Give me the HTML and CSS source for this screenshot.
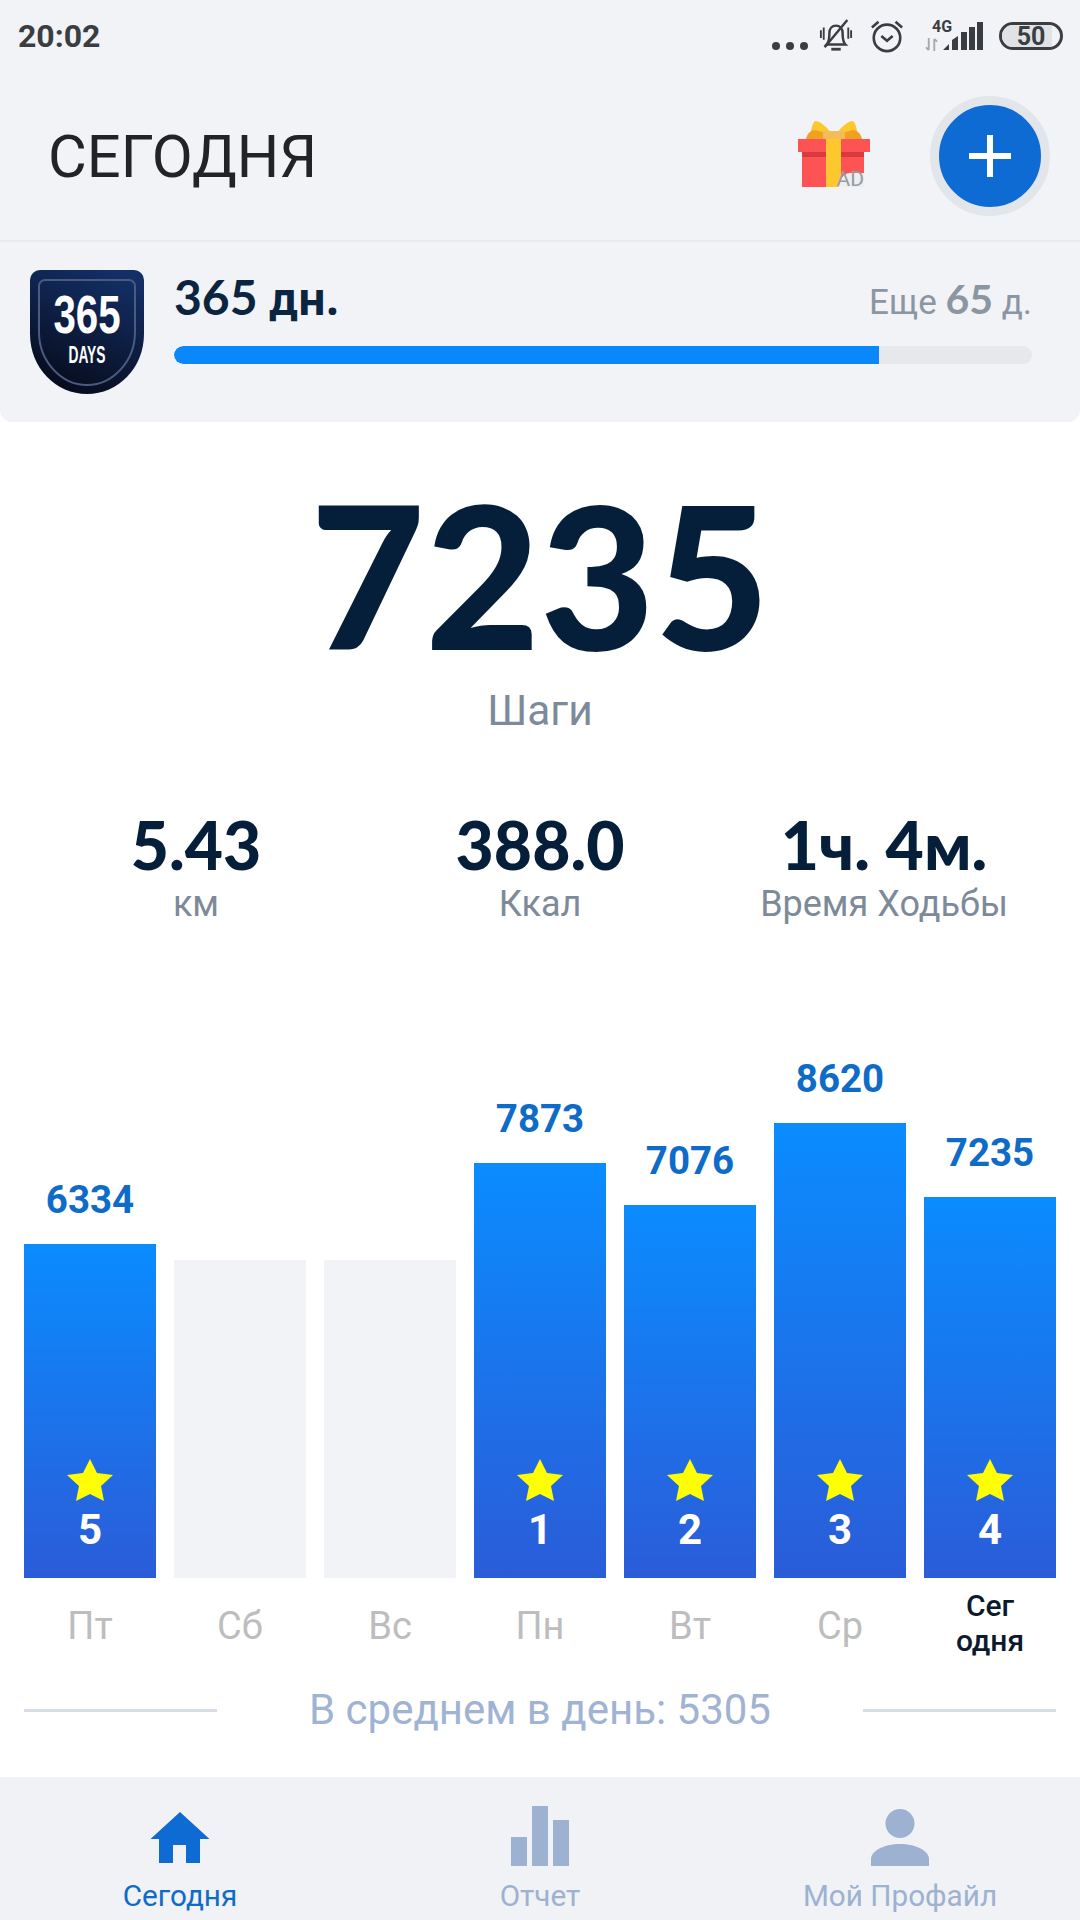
FILE: index.html
```html
<!DOCTYPE html>
<html lang="ru">
<head>
<meta charset="utf-8">
<title>Сегодня</title>
<link rel="stylesheet" href="styles.css">
</head>
<body>
<div class="screen">
  <div class="top">
    <div class="status">
      <span class="clock">20:02</span>
      <div class="status-icons">
        <svg class="ic-dots" viewBox="0 0 36 8"><circle cx="4" cy="4" r="4"/><circle cx="18" cy="4" r="4"/><circle cx="32" cy="4" r="4"/></svg>
        <svg class="ic-bell" viewBox="0 0 36 36" fill="none" stroke="#3a3d42" stroke-width="2.6"><path d="M8 27c3-3 3-8 3-12 0-5 3-8 7-8s7 3 7 8c0 4 0 9 3 12z"/><path d="M13 32h10" stroke-width="3"/><path d="M30 1 6 30"/><path d="M2 12v8M5 9v13M34 12v8M31 9v12" stroke-width="2"/></svg>
        <svg class="ic-alarm" viewBox="0 0 36 36" fill="none" stroke="#3a3d42" stroke-width="2.8"><circle cx="18" cy="20" r="14"/><path d="M12 18l6 5 6-5"/><path d="M2 9l7-6M34 9l-7-6"/></svg>
        <div class="net">
          <span class="net-label">4G</span>
          <svg class="ic-arrows" viewBox="0 0 14 14" fill="none" stroke="#a6a8ab" stroke-width="2"><path d="M4 0v13M1 10l3 3M10 14V1M13 4l-3-3"/></svg>
        </div>
        <svg class="ic-signal" viewBox="0 0 40 28" fill="#3a3d42"><path d="M0 28l6-6v6zM9 18l6-4v14H9zM18 10h6v18h-6zM26 5h6v23h-6zM34 0h6v28h-6z"/></svg>
        <div class="battery"><span class="batt-fill"></span><span class="batt-num">50</span></div>
      </div>
    </div>
    <div class="header">
      <h1 class="title">СЕГОДНЯ</h1>
      <div class="header-actions">
        <div class="gift">
          <svg viewBox="0 0 72 66" width="72" height="66">
            <path d="M36 17C30 6 22 0 17 0c-3 3-5 10-4 18z" fill="#fdc72e"/>
            <path d="M36 17C42 6 50 0 55 0c3 3 5 10 4 18z" fill="#fdc72e"/>
            <path d="M8 18c1-5 4-8 8-9 8 1 15 4 20 9zM64 18c-1-5-4-8-8-9-8 1-15 4-20 9z" fill="#efa222"/>
            <rect x="25" y="10" width="22" height="10" fill="#f2bd58"/>
            <rect y="18" width="72" height="13" fill="#fd5355"/>
            <rect x="4" y="31" width="62" height="35" fill="#fd5355"/>
            <rect x="4" y="31" width="62" height="5" fill="#d93a3f"/>
            <rect x="28" y="18" width="15" height="48" fill="#fdc72e"/>
            <path d="M41 66c0-8 5-14 11-14h14v14z" fill="#eceef1"/>
          </svg>
          <span class="ad">AD</span>
        </div>
        <button class="add"><svg viewBox="0 0 42 42" width="42" height="42"><path d="M18 0h6v18h18v6H24v18h-6V24H0v-6h18z" fill="#fff"/></svg></button>
      </div>
    </div>
  </div>

  <section class="streak">
    <div class="badge">
      <svg viewBox="0 0 114 124" width="114" height="124">
        <defs><linearGradient id="bd" x1="0.7" y1="0" x2="0.3" y2="1"><stop offset="0" stop-color="#132f66"/><stop offset="1" stop-color="#070b1a"/></linearGradient></defs>
        <path d="M10 0h94a10 10 0 0 1 10 10v54c0 34-26 60-57 60S0 98 0 64V10A10 10 0 0 1 10 0z" fill="url(#bd)"/>
        <path d="M15 10h84a6 6 0 0 1 6 6v46c0 29-22 53-48 53S9 91 9 62V16a6 6 0 0 1 6-6z" fill="none" stroke="#4a5a80" stroke-width="2"/>
      </svg>
      <span class="badge-num">365</span>
      <span class="badge-days">DAYS</span>
    </div>
    <div class="streak-main">
      <div class="streak-row">
        <span class="streak-title"><span class="lato">365</span> <b>дн.</b></span>
        <span class="streak-left">Еще <b class="lato">65</b> д.</span>
      </div>
      <div class="track"><div class="track-fill"></div></div>
    </div>
  </section>

  <main class="content">
    <div class="hero">
      <div class="hero-num">7235</div>
      <div class="hero-label">Шаги</div>
    </div>
    <div class="stats">
      <div class="stat"><div class="stat-num">5.43</div><div class="stat-label">км</div></div>
      <div class="stat"><div class="stat-num">388.0</div><div class="stat-label">Ккал</div></div>
      <div class="stat"><div class="stat-num">1ч. 4м.</div><div class="stat-label">Время Ходьбы</div></div>
    </div>

    <div class="chart">
      <div class="col"><div class="val">6334</div><div class="bar bar-1"><svg class="star" viewBox="0 0 46 42"><path d="M23 0l7 14 16 2-12 11 3 15-14-7-14 7 3-15L0 16l16-2z"/></svg><span class="rank">5</span></div></div>
      <div class="col"><div class="bar bar-empty"></div></div>
      <div class="col"><div class="bar bar-empty"></div></div>
      <div class="col"><div class="val">7873</div><div class="bar bar-2"><svg class="star" viewBox="0 0 46 42"><path d="M23 0l7 14 16 2-12 11 3 15-14-7-14 7 3-15L0 16l16-2z"/></svg><span class="rank">1</span></div></div>
      <div class="col"><div class="val">7076</div><div class="bar bar-3"><svg class="star" viewBox="0 0 46 42"><path d="M23 0l7 14 16 2-12 11 3 15-14-7-14 7 3-15L0 16l16-2z"/></svg><span class="rank">2</span></div></div>
      <div class="col"><div class="val">8620</div><div class="bar bar-4"><svg class="star" viewBox="0 0 46 42"><path d="M23 0l7 14 16 2-12 11 3 15-14-7-14 7 3-15L0 16l16-2z"/></svg><span class="rank">3</span></div></div>
      <div class="col"><div class="val">7235</div><div class="bar bar-5"><svg class="star" viewBox="0 0 46 42"><path d="M23 0l7 14 16 2-12 11 3 15-14-7-14 7 3-15L0 16l16-2z"/></svg><span class="rank">4</span></div></div>
    </div>
    <div class="days">
      <span>Пт</span><span>Сб</span><span>Вс</span><span>Пн</span><span>Вт</span><span>Ср</span><span class="today">Сег<br>одня</span>
    </div>
    <div class="avg"><i></i><span>В среднем в день: 5305</span><i></i></div>
  </main>

  <nav class="tabs">
    <div class="tab active">
      <svg viewBox="0 0 60 60" width="60" height="60"><path d="M30 6 59.500 33H50V57H36V39H23V57H9V33H.5z"/></svg>
      <span>Сегодня</span>
    </div>
    <div class="tab">
      <svg viewBox="0 0 58 60" width="58" height="60"><path d="M0 31h16v29H0zM21 0h16v60H21zM42 14h16v46H42z"/></svg>
      <span>Отчет</span>
    </div>
    <div class="tab">
      <svg viewBox="0 0 58 60" width="58" height="60"><ellipse cx="29" cy="17.500" rx="14.500" ry="14.500"/><path d="M0 60V53C0 45 13 38 29 38S58 45 58 53v7z"/></svg>
      <span>Мой Профайл</span>
    </div>
  </nav>
</div>
</body>
</html>
```

FILE: styles.css
```css
* { box-sizing: border-box; }
html, body { margin: 0; padding: 0; }
body { width: 1080px; height: 1920px; background: #fff; font-family: Roboto, "Noto Sans", sans-serif; overflow: hidden; }
.screen { width: 1080px; height: 1920px; display: flex; flex-direction: column; }
.lato { font-family: Lato, Roboto, sans-serif; }

.top { height: 242px; flex: none; background: #f1f3f7; border-bottom: 2px solid #e8eaee; }
.status { height: 72px; display: flex; justify-content: space-between; align-items: center; padding: 0 17px 0 18px; }
.clock { font-size: 32px; font-weight: 700; color: #3a3d42; }
.status-icons { display: flex; align-items: center; }
.ic-dots { width: 36px; height: 8px; fill: #3a3d42; margin-top: 20px; margin-right: 11px; }
.ic-bell { width: 34px; height: 34px; margin-right: 17px; }
.ic-alarm { width: 34px; height: 34px; margin-right: 21px; }
.net { width: 18px; height: 30px; position: relative; }
.net-label { position: absolute; left: 7px; top: -4px; font-size: 16px; font-weight: 700; color: #3a3d42; }
.ic-arrows { position: absolute; left: 0; top: 17px; width: 13px; height: 13px; }
.ic-signal { width: 40px; height: 28px; margin-right: 16px; }
.battery { width: 64px; height: 28px; border: 3px solid #3a3d42; border-radius: 14px; position: relative; display: flex; align-items: center; justify-content: center; overflow: hidden; }
.batt-fill { position: absolute; left: 0; top: 0; bottom: 0; width: 50px; background: #e1e2e5; }
.batt-num { position: relative; font-size: 25px; font-weight: 700; color: #3a3d42; line-height: 1; }

.header { height: 168px; display: flex; justify-content: space-between; align-items: center; padding: 0 30px 0 48px; }
.title { margin: 0; padding-top: 2px; font-size: 59.600px; font-weight: 400; color: #212326; }
.header-actions { display: flex; align-items: center; gap: 60px; }
.gift { position: relative; width: 72px; height: 66px; margin-top: -4px; }
.gift svg { display: block; }
.ad { position: absolute; right: 6px; bottom: -3px; font-size: 21px; line-height: 22px; color: #9a9c9f; }
.add { width: 120px; height: 120px; border-radius: 50%; background: #0f6bd4; border: 9px solid #e2e5e9; padding: 0; display: flex; align-items: center; justify-content: center; }
.add svg { display: block; }

.streak { height: 180px; flex: none; background: #f1f3f7; border-radius: 0 0 12px 12px; display: flex; padding: 28px 48px 0 30px; gap: 30px; }
.badge { position: relative; width: 114px; height: 124px; flex: none; text-align: center; color: #fff; }
.badge svg { display: block; }
.badge-num { position: absolute; left: 0; right: 0; top: 22px; font-family: "Liberation Sans", sans-serif; font-size: 53px; font-weight: 700; line-height: 46px; transform: scaleX(.76); }
.badge-days { position: absolute; left: 0; right: 0; top: 73px; font-family: "Liberation Sans", sans-serif; font-size: 23px; font-weight: 700; line-height: 24px; transform: scaleX(.6); }
.streak-main { flex: 1; }
.streak-row { height: 56px; display: flex; justify-content: space-between; align-items: center; }
.streak-title { font-size: 48px; font-weight: 700; color: #0b2440; line-height: 56px; }
.streak-title b { font-family: "Noto Sans", sans-serif; font-weight: 700; font-size: 44px; }
.streak-left { font-size: 35px; color: #8c96a1; }
.streak-left b { font-size: 41px; font-weight: 700; }
.track { margin-top: 20px; height: 18px; border-radius: 9px; background: #e7e8eb; overflow: hidden; }
.track-fill { width: 82.200%; height: 100%; border-radius: 9px 0 0 9px; background: #0a87fb; }

.content { flex: 1; display: flex; flex-direction: column; }
.hero { text-align: center; padding-top: 50px; height: 385px; flex: none; }
.hero-num { font-family: Lato, sans-serif; font-weight: 900; font-size: 198px; line-height: 204px; color: #051f3b; }
.hero-label { font-size: 42.500px; color: #7d8a99; line-height: 46px; margin-top: 12px; }
.stats { display: flex; padding: 4px 24px 0; height: 118px; flex: none; }
.stat { flex: 1; text-align: center; }
.stat-num { font-family: Lato, Roboto, sans-serif; font-weight: 900; font-size: 66px; line-height: 68px; color: #051f3b; }
.stat-label { font-size: 36px; color: #7d8a99; line-height: 40px; margin-top: 5px; }
.chart { flex: 1; display: grid; grid-template-columns: repeat(7, 132px); gap: 18px; padding: 0 24px; }
.col { display: flex; flex-direction: column; justify-content: flex-end; align-items: center; }
.val { font-size: 38.500px; font-weight: 700; color: #0f6bc8; line-height: 44px; margin-bottom: 22px; }
.bar { width: 132px; display: flex; flex-direction: column; align-items: center; justify-content: flex-end; padding-bottom: 27px; background: linear-gradient(#0a8cff, #2b5cd8 ); }
.bar-empty { height: 318px; background: #f1f3f7; }
.bar-1 { height: 334px; }
.bar-2 { height: 415px; }
.bar-3 { height: 373px; }
.bar-4 { height: 455px; }
.bar-5 { height: 381px; }
.star { width: 46px; height: 42px; fill: #ffff00; margin-bottom: 8px; }
.rank { font-size: 42px; font-weight: 700; color: #fff; line-height: 42px; }
.days { height: 104px; flex: none; display: grid; grid-template-columns: repeat(7, 132px); gap: 18px; padding: 26px 24px 0; align-items: start; text-align: center; font-size: 38px; color: #bdbdbd; }
.days span { line-height: 44px; }
.days .today { font-size: 30px; font-weight: 500; color: #0b1a2c; line-height: 35px; margin-top: -16px; }
.avg { height: 95px; flex: none; display: flex; align-items: flex-start; justify-content: space-between; padding: 0 24px; font-size: 42px; color: #a0b3d2; }
.avg span { line-height: 48px; margin-top: 4px; }
.avg i { width: 193px; height: 3px; background: #d7dde6; margin-top: 27px; }

.tabs { height: 143px; flex: none; background: #f0f2f5; display: grid; grid-template-columns: repeat(3, 1fr); }
.tab { display: flex; flex-direction: column; align-items: center; padding-top: 29px; color: #9db1d1; fill: #9db1d1; }
.tab svg { display: block; margin-bottom: 13px; }
.tab span { font-size: 29.700px; line-height: 34px; }
.tab.active { color: #0f6bc8; fill: #0f6bd4; }
```
